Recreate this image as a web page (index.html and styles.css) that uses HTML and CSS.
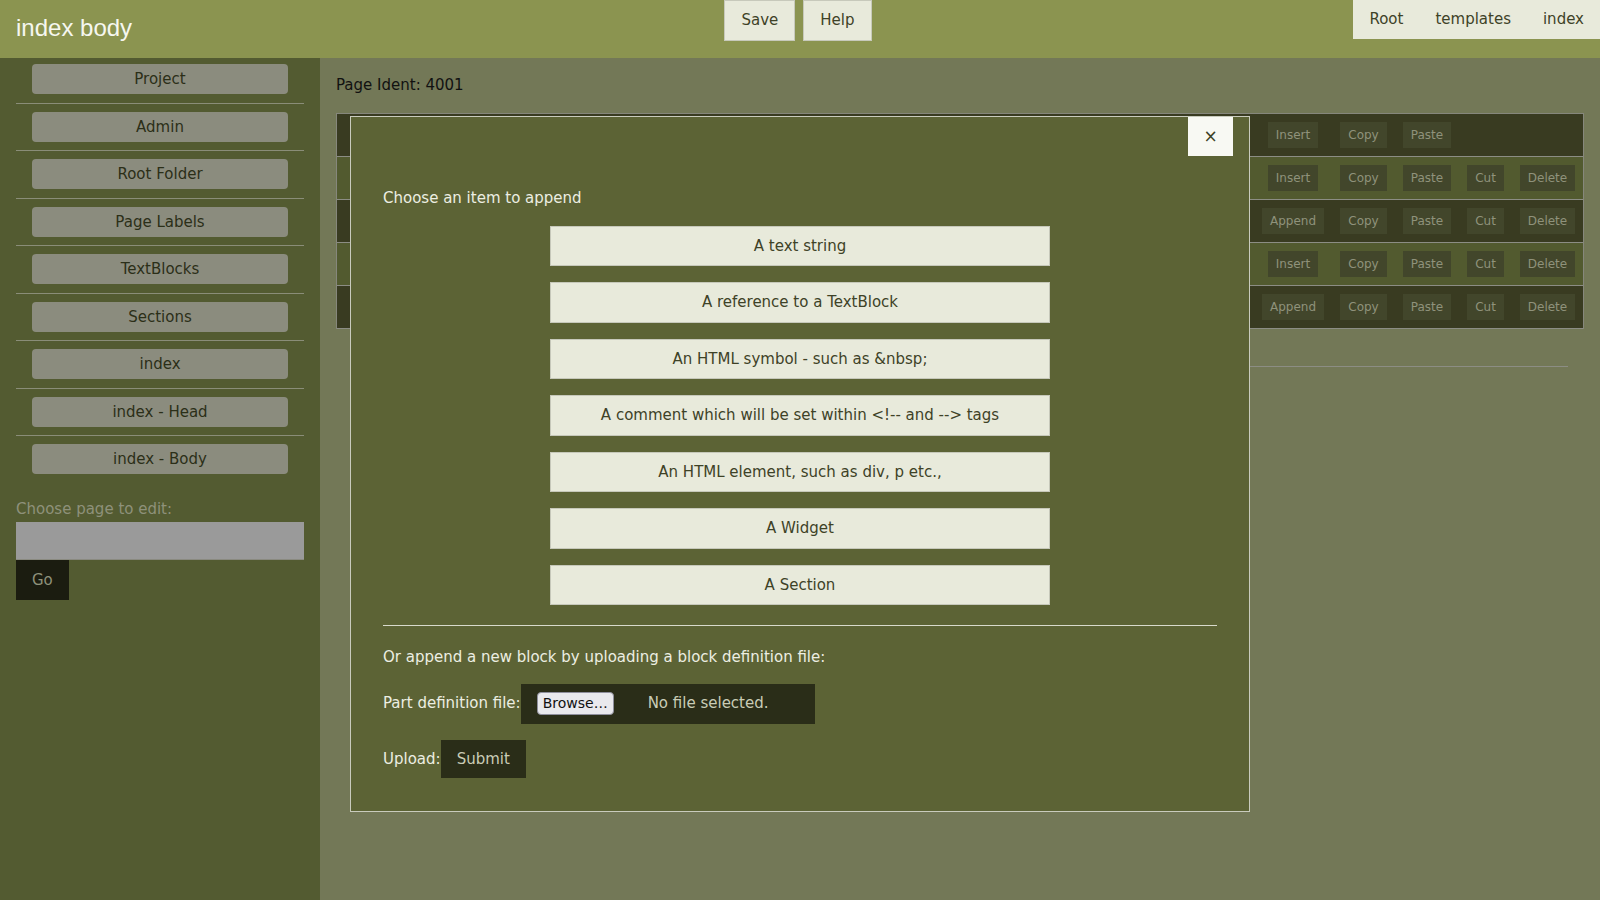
FILE: index.html
```html
<!DOCTYPE html>
<html lang="en">
<head>
<meta charset="utf-8">
<title>index body</title>
<link rel="stylesheet" href="styles.css">
</head>
<body>
<header class="topbar">
  <h1 class="title">index body</h1>
  <div class="actions">
    <button class="top-btn">Save</button>
    <button class="top-btn">Help</button>
  </div>
  <nav class="crumbs">
    <a class="crumb">Root</a>
    <a class="crumb">templates</a>
    <a class="crumb">index</a>
  </nav>
</header>
<div class="layout">
  <aside class="sidebar">
    <ul class="side-list">
      <li class="side-item"><a class="side-btn">Project</a></li>
      <li class="side-item"><a class="side-btn">Admin</a></li>
      <li class="side-item"><a class="side-btn">Root Folder</a></li>
      <li class="side-item"><a class="side-btn">Page Labels</a></li>
      <li class="side-item"><a class="side-btn">TextBlocks</a></li>
      <li class="side-item"><a class="side-btn">Sections</a></li>
      <li class="side-item"><a class="side-btn">index</a></li>
      <li class="side-item"><a class="side-btn">index - Head</a></li>
      <li class="side-item last"><a class="side-btn">index - Body</a></li>
    </ul>
    <form class="choose">
      <label class="choose-label">Choose page to edit:</label>
      <div class="choose-input"></div>
      <button class="go-btn" type="button">Go</button>
    </form>
  </aside>
  <main class="main">
    <p class="ident">Page Ident: 4001</p>
    <div class="parts">
      <div class="part dark">
        <div class="part-body"></div>
        <div class="cell c1"><span class="pbtn">Insert</span></div>
        <div class="cell c2"><span class="pbtn">Copy</span></div>
        <div class="cell c3"><span class="pbtn">Paste</span></div>
        <div class="cell c4"></div>
        <div class="cell c5"></div>
      </div>
      <div class="part light">
        <div class="part-body"></div>
        <div class="cell c1"><span class="pbtn">Insert</span></div>
        <div class="cell c2"><span class="pbtn">Copy</span></div>
        <div class="cell c3"><span class="pbtn">Paste</span></div>
        <div class="cell c4"><span class="pbtn">Cut</span></div>
        <div class="cell c5"><span class="pbtn">Delete</span></div>
      </div>
      <div class="part dark">
        <div class="part-body"></div>
        <div class="cell c1"><span class="pbtn">Append</span></div>
        <div class="cell c2"><span class="pbtn">Copy</span></div>
        <div class="cell c3"><span class="pbtn">Paste</span></div>
        <div class="cell c4"><span class="pbtn">Cut</span></div>
        <div class="cell c5"><span class="pbtn">Delete</span></div>
      </div>
      <div class="part light">
        <div class="part-body"></div>
        <div class="cell c1"><span class="pbtn">Insert</span></div>
        <div class="cell c2"><span class="pbtn">Copy</span></div>
        <div class="cell c3"><span class="pbtn">Paste</span></div>
        <div class="cell c4"><span class="pbtn">Cut</span></div>
        <div class="cell c5"><span class="pbtn">Delete</span></div>
      </div>
      <div class="part dark">
        <div class="part-body"></div>
        <div class="cell c1"><span class="pbtn">Append</span></div>
        <div class="cell c2"><span class="pbtn">Copy</span></div>
        <div class="cell c3"><span class="pbtn">Paste</span></div>
        <div class="cell c4"><span class="pbtn">Cut</span></div>
        <div class="cell c5"><span class="pbtn">Delete</span></div>
      </div>
    </div>
    <div class="rule"></div>
  </main>
</div>

<div class="modal">
  <div class="modal-head">
    <button class="close-btn" type="button">×</button>
  </div>
  <p class="modal-lead">Choose an item to append</p>
  <div class="choices">
    <button class="choice" type="button">A text string</button>
    <button class="choice" type="button">A reference to a TextBlock</button>
    <button class="choice" type="button">An HTML symbol - such as &amp;nbsp;</button>
    <button class="choice" type="button">A comment which will be set within &lt;!-- and --&gt; tags</button>
    <button class="choice" type="button">An HTML element, such as div, p etc.,</button>
    <button class="choice" type="button">A Widget</button>
    <button class="choice" type="button">A Section</button>
  </div>
  <div class="modal-rule"></div>
  <p class="modal-text">Or append a new block by uploading a block definition file:</p>
  <div class="file-row">
    <span class="row-label">Part definition file:</span>
    <div class="file-box">
      <span class="browse">Browse…</span>
      <span class="nofile">No file selected.</span>
    </div>
  </div>
  <div class="upload-row">
    <span class="row-label">Upload:</span>
    <button class="submit" type="button">Submit</button>
  </div>
</div>
</body>
</html>
```

FILE: styles.css
```css
* { box-sizing: border-box; }

html, body {
  margin: 0;
  padding: 0;
  height: 100%;
}

body {
  font-family: "DejaVu Sans", "Liberation Sans", sans-serif;
  font-size: 15px;
  overflow: hidden;
  background: #737857;
  position: relative;
}

button {
  font-family: inherit;
  font-size: inherit;
  margin: 0;
}

/* ---------- header ---------- */
.topbar {
  height: 58px;
  background: #8b9450;
  display: grid;
  grid-template-columns: 1fr auto 1fr;
  align-items: start;
}

.title {
  margin: 0;
  padding: 14px 0 0 16px;
  font-family: "Liberation Sans", Arial, sans-serif;
  font-size: 24px;
  font-weight: normal;
  color: #f6f7f0;
  line-height: normal;
}

.actions {
  display: flex;
  gap: 8px;
  transform: translateX(-2px);
}

.top-btn {
  height: 41px;
  padding: 0 16px 2px;
  background: #e8eadb;
  border: 1px solid #c7c9bb;
  color: #3e4227;
  border-radius: 0;
}

.crumbs {
  justify-self: end;
  display: flex;
  height: 39px;
  background: #e8eadb;
}

.crumb {
  padding: 0 16px;
  line-height: 39px;
  color: #3e4227;
}

/* ---------- layout ---------- */
.layout {
  display: flex;
  height: calc(100% - 58px);
}

.sidebar {
  width: 320px;
  flex: 0 0 320px;
  background: #535b31;
  padding: 6px 16px 0;
}

.side-list {
  list-style: none;
  margin: 0;
  padding: 0;
}

.side-item {
  padding-bottom: 8.5px;
  border-bottom: 1px solid #8a8d78;
  margin-bottom: 8px;
}

.side-item.last {
  border-bottom: none;
  padding-bottom: 0;
  margin-bottom: 0;
}

.side-btn {
  display: block;
  margin: 0 16px;
  height: 30px;
  line-height: 30px;
  text-align: center;
  background: #8b8c7e;
  color: #2b2f18;
  border-radius: 4px;
}

.choose {
  margin-top: 25.5px;
}

.choose-label {
  display: block;
  color: #8e917a;
  margin-bottom: 4px;
}

.choose-input {
  height: 38px;
  background: #9a9a9a;
  border-bottom: 1px solid #8a8a80;
}

.go-btn {
  display: block;
  height: 40px;
  padding: 0 16px;
  background: #1b1c10;
  color: #8e917a;
  border: none;
  border-radius: 0;
}

/* ---------- main ---------- */
.main {
  flex: 1;
  padding: 18px 16px 16px 16px;
}

.ident {
  margin: 0 0 19px;
  color: #111;
}

.parts {
  border: 1px solid #86877c;
  border-bottom: none;
}

.part {
  display: flex;
  height: 43px;
  border-bottom: 1px solid #8c8d84;
  align-items: center;
}

.part.dark { background: #393b21; }
.part.light { background: #525a2f; }

.part-body { flex: 1; }

.cell {
  display: flex;
  justify-content: center;
}

.c1 { width: 78px; }
.c2 { width: 63px; }
.c3 { width: 64px; }
.c4 { width: 53px; }
.c5 { width: 71px; }

.pbtn {
  display: block;
  height: 26px;
  line-height: 26px;
  padding: 0 8px;
  font-size: 12px;
  background: #42462b;
  color: #8f927b;
}

.rule {
  margin: 37px 16px 0 16px;
  border-top: 1px solid #8c8d84;
}

/* ---------- modal ---------- */
.modal {
  position: absolute;
  left: 350px;
  top: 116px;
  width: 900px;
  background: #5c6335;
  border: 1px solid #c9cbbd;
  padding: 0 32px 33px;
  color: #eceee2;
}

.modal-head {
  display: flex;
  justify-content: flex-end;
  margin-right: -16px;
}

.close-btn {
  width: 45px;
  height: 39px;
  background: #f8f9f3;
  border: none;
  border-radius: 0;
  color: #3e4227;
  font-size: 17px;
  line-height: 1;
  padding: 0;
}

.modal-lead {
  margin: 33px 0 0;
}

.choices {
  margin-top: 18.5px;
  display: flex;
  flex-direction: column;
  align-items: center;
  gap: 16px;
}

.choice {
  width: 500px;
  height: 40.5px;
  background: #e8eadb;
  border: 1px solid #c6c8ba;
  border-radius: 0;
  color: #3e4227;
  padding: 0;
}

.modal-rule {
  margin-top: 20px;
  border-top: 1px solid #d8dacc;
}

.modal-text {
  margin: 22px 0 0;
}

.file-row {
  margin-top: 18px;
  display: flex;
  align-items: baseline;
}

.file-box {
  display: flex;
  align-items: baseline;
  width: 294px;
  height: 40px;
  padding: 8px 0 0 16px;
  background: #2a2d18;
}

.browse {
  display: inline-block;
  height: 23px;
  line-height: 21px;
  padding: 0 5px;
  font-size: 14px;
  background: #e9e9ed;
  color: #111;
  border: 1px solid #8f8f9d;
  border-radius: 4px;
}

.nofile {
  margin-left: 34px;
  color: #c9ccb6;
}

.upload-row {
  margin-top: 15.5px;
  display: flex;
  align-items: baseline;
}

.submit {
  height: 38px;
  padding: 0 16px;
  background: #2a2d18;
  color: #c9ccb6;
  border: none;
  border-radius: 0;
}
```
